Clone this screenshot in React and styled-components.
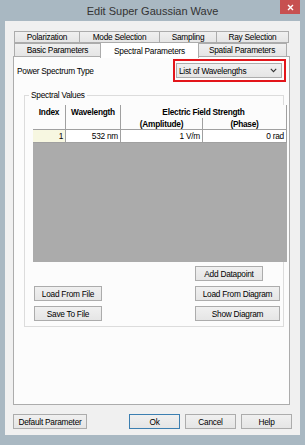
import React from 'react'
import styled, { createGlobalStyle } from 'styled-components'

const GlobalStyle = createGlobalStyle`
  html, body {
    margin: 0;
    padding: 0;
    background: #a9b8c2;
  }
  * {
    box-sizing: border-box;
  }
`

const uiFont = `'Liberation Sans', Arial, sans-serif`

const Window = styled.div`
  width: 305px;
  height: 445px;
  background: #a9b8c2;
  display: flex;
  flex-direction: column;
  font-family: ${uiFont};
  font-size: 8.3px;
  letter-spacing: -0.25px;
  color: #000;
`

const TitleBar = styled.div`
  height: 21px;
  display: grid;
  grid-template-columns: 1fr auto 1fr;
  align-items: center;
`

const Title = styled.div`
  grid-column: 2;
  font-size: 11px;
  letter-spacing: 0;
  color: #333;
  padding-top: 1px;
`

const CloseButton = styled.div`
  grid-column: 3;
  justify-self: end;
  align-self: start;
  width: 20px;
  height: 14px;
  margin-right: 5px;
  background: #c75050;
  display: flex;
  align-items: center;
  justify-content: center;
`

const Client = styled.div`
  flex: 1;
  margin: 0 5px 10px;
  background: #f0f0f0;
  padding: 10px 9px 6px 8px;
  display: flex;
  flex-direction: column;
`

const TabControl = styled.div`
  flex: 1;
  display: flex;
  flex-direction: column;
  margin-right: 1px;
`

const TabRow = styled.div`
  display: flex;
  padding-left: 1px;
  height: ${p => p.$h}px;
  align-items: flex-end;
  position: relative;
  z-index: ${p => (p.$front ? 2 : 1)};
`

const Tab = styled.div`
  width: ${p => p.$w}px;
  height: ${p => (p.$active ? p.$h + 2 : p.$h)}px;
  margin-bottom: ${p => (p.$active ? -1 : 0)}px;
  margin-left: ${p => (p.$active ? -1 : 0)}px;
  margin-right: ${p => (p.$active ? -1 : 0)}px;
  border: 1px solid #acacac;
  border-bottom: ${p => (p.$active ? 'none' : '1px solid #acacac')};
  border-left-width: ${p => (p.$first || p.$active ? 1 : 0)}px;
  background: ${p => (p.$active ? '#ffffff' : 'linear-gradient(#f0f0f0, #e5e5e5)')};
  display: flex;
  align-items: center;
  justify-content: center;
  white-space: nowrap;
  position: relative;
  z-index: ${p => (p.$active ? 3 : 1)};
`

const TabPanel = styled.div`
  flex: 1;
  margin-top: -1px;
  border: 1px solid #acacac;
  background: #fcfcfc;
  padding: 2px 3px 0 3px;
  display: flex;
  flex-direction: column;
`

const SpectrumRow = styled.div`
  display: flex;
  align-items: center;
  justify-content: space-between;
`

const Highlight = styled.div`
  border: 2px solid #e3151a;
  padding: 2px 2px 2px 1px;
`

const ComboBox = styled.div`
  width: 106px;
  height: 15px;
  border: 1px solid #acacac;
  background: linear-gradient(#f0f0f0, #e5e5e5);
  display: flex;
  align-items: center;
  justify-content: space-between;
  padding: 0 4px 0 2px;
`

const GroupBox = styled.fieldset`
  margin: 8px 2px 0 7px;
  padding: 0 2px 5px 8px;
  border: 1px solid #dcdcdc;
  border-radius: 0;
  min-width: 0;
`

const Legend = styled.legend`
  padding: 0 2px;
  margin-left: -4px;
  line-height: 11px;
`

const DataGrid = styled.div`
  margin-top: 4px;
  display: grid;
  grid-template-columns: 33px 55px 82px 84px;
  grid-template-rows: 13px 12px 13px 119px;
`

const HeadCell = styled.div`
  grid-column: ${p => p.$col};
  grid-row: ${p => p.$row};
  background: #fcfcfc;
  border-right: 1px solid #a0a0a0;
  border-bottom: ${p => (p.$bottom ? '1px solid #a0a0a0' : 'none')};
  font-weight: bold;
  display: flex;
  justify-content: center;
  align-items: ${p => (p.$top ? 'flex-start' : 'center')};
  padding-top: ${p => (p.$top ? 2 : 0)}px;
  white-space: nowrap;
`

const DataCell = styled.div`
  background: ${p => (p.$index ? '#f7f7e1' : '#ffffff')};
  border-right: 1px solid #a0a0a0;
  border-bottom: 1px solid #a0a0a0;
  display: flex;
  align-items: center;
  justify-content: flex-end;
  padding-right: 2px;
  white-space: nowrap;
`

const GridEmpty = styled.div`
  grid-column: 1 / 5;
  background: #ababab;
`

const ButtonGrid = styled.div`
  margin-top: 4px;
  display: grid;
  grid-template-columns: auto auto;
  justify-content: space-between;
  row-gap: 5px;
  margin-right: 1px;
  margin-left: 1px;
`

const Button = styled.div`
  grid-column: ${p => p.$col || 'auto'};
  width: ${p => p.$w}px;
  height: ${p => p.$h || 15}px;
  border: 1px solid ${p => (p.$default ? '#3c7fb1' : '#acacac')};
  background: linear-gradient(#f0f0f0, #e5e5e5);
  display: flex;
  align-items: center;
  justify-content: center;
  white-space: nowrap;
`

const DialogButtons = styled.div`
  margin-top: 9px;
  display: flex;
  align-items: center;
  gap: 5px;
  margin-right: -1px;
`

const Spacer = styled.div`
  flex: 1;
`

const Chevron = () => (
  <svg width="7" height="5" viewBox="0 0 7 5">
    <path d="M0.8 0.8 L3.5 3.6 L6.2 0.8" fill="none" stroke="#333" strokeWidth="1.1" />
  </svg>
)

const topTabs = [
  { label: 'Polarization', w: 66 },
  { label: 'Mode Selection', w: 80 },
  { label: 'Sampling', w: 57 },
  { label: 'Ray Selection', w: 72 },
]

const bottomTabs = [
  { label: 'Basic Parameters', w: 87 },
  { label: 'Spectral Parameters', w: 99, active: true },
  { label: 'Spatial Parameters', w: 89 },
]

const App = () => {
  return (
    <>
      <GlobalStyle />
      <Window>
        <TitleBar>
          <Title>Edit Super Gaussian Wave</Title>
          <CloseButton>
            <svg width="7" height="7" viewBox="0 0 7 7">
              <path d="M1 1 L6 6 M6 1 L1 6" stroke="#fff" strokeWidth="1.4" />
            </svg>
          </CloseButton>
        </TitleBar>
        <Client>
          <TabControl>
            <TabRow $h={12}>
              {topTabs.map((t, i) => (
                <Tab key={t.label} $w={t.w} $h={12} $first={i === 0}>{t.label}</Tab>
              ))}
            </TabRow>
            <TabRow $h={14} $front>
              {bottomTabs.map((t, i) => (
                <Tab key={t.label} $w={t.w} $h={14} $first={i === 0} $active={t.active}>{t.label}</Tab>
              ))}
            </TabRow>
            <TabPanel>
              <SpectrumRow>
                <span>Power Spectrum Type</span>
                <Highlight>
                  <ComboBox>
                    <span>List of Wavelengths</span>
                    <Chevron />
                  </ComboBox>
                </Highlight>
              </SpectrumRow>
              <GroupBox>
                <Legend>Spectral Values</Legend>
                <DataGrid>
                  <HeadCell $col="1" $row="1 / 3" $top $bottom>Index</HeadCell>
                  <HeadCell $col="2" $row="1 / 3" $top $bottom>Wavelength</HeadCell>
                  <HeadCell $col="3 / 5" $row="1">Electric Field Strength</HeadCell>
                  <HeadCell $col="3" $row="2" $bottom>(Amplitude)</HeadCell>
                  <HeadCell $col="4" $row="2" $bottom>(Phase)</HeadCell>
                  <DataCell $index>1</DataCell>
                  <DataCell>532 nm</DataCell>
                  <DataCell>1 V/m</DataCell>
                  <DataCell>0 rad</DataCell>
                  <GridEmpty />
                </DataGrid>
                <ButtonGrid>
                  <Button $col="2" $w={68}>Add Datapoint</Button>
                  <Button $w={68}>Load From File</Button>
                  <Button $w={85}>Load From Diagram</Button>
                  <Button $w={68}>Save To File</Button>
                  <Button $w={85}>Show Diagram</Button>
                </ButtonGrid>
              </GroupBox>
            </TabPanel>
          </TabControl>
          <DialogButtons>
            <Button $w={74}>Default Parameter</Button>
            <Spacer />
            <Button $w={51} $default>Ok</Button>
            <Button $w={51}>Cancel</Button>
            <Button $w={51}>Help</Button>
          </DialogButtons>
        </Client>
      </Window>
    </>
  )
}

export default App
